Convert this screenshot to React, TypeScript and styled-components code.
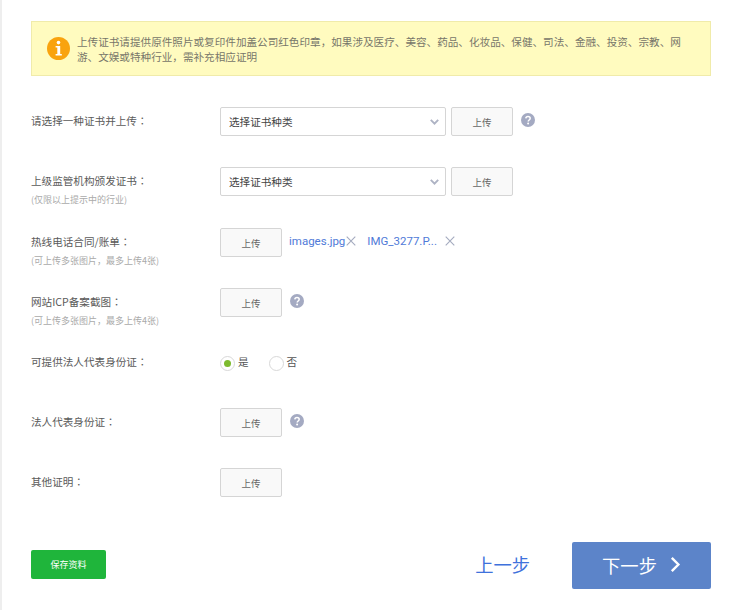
import React from "react";
import styled, { createGlobalStyle } from "styled-components";

const Global = createGlobalStyle`
  html, body { margin: 0; padding: 0; background: #fff; }
  body { font-family: "Noto Sans CJK SC", "Liberation Sans", sans-serif; }
`;

const Page = styled.div`
  box-sizing: border-box;
  width: 740px;
  height: 610px;
  border-left: 2px solid #eeeeee;
  padding: 21px 29px 0 29px;
  overflow: hidden;
  color: #555;
`;

const Notice = styled.div`
  box-sizing: border-box;
  height: 55px;
  background: #fffbbf;
  border: 1px solid #f0ebaa;
  display: flex;
  align-items: center;
  padding: 0 14px 0 15px;
  gap: 7px;
  margin-bottom: 31px;
`;

const NoticeText = styled.p`
  margin: 0;
  padding-top: 1px;
  font-size: 10.6px;
  line-height: 15px;
  color: #77766a;
  width: 612px;
`;

const Form = styled.div`
  display: flex;
  flex-direction: column;
`;

const Row = styled.div<{ $height?: number }>`
  display: flex;
  height: ${(p) => p.$height ?? 60}px;
  align-items: flex-start;
`;

const LabelCol = styled.div`
  width: 189px;
  flex: none;
`;

const Label = styled.div`
  font-size: 10.6px;
  line-height: 16px;
  padding-top: 6px;
  color: #5a5a5a;
`;

const Colon = styled.span`
  font-family: "Noto Sans CJK TC", sans-serif;
`;

const Hint = styled.div`
  font-size: 9px;
  line-height: 12px;
  margin-top: 5px;
  color: #aaa;
`;

const Controls = styled.div`
  display: flex;
  align-items: flex-start;
`;

const SelectBox = styled.div`
  box-sizing: border-box;
  width: 226px;
  height: 29px;
  border: 1px solid #d5d5d5;
  border-radius: 2px;
  background: #fff;
  display: flex;
  align-items: center;
  justify-content: space-between;
  padding: 0 6px 0 8px;
  font-size: 10.6px;
  color: #444;
  margin-right: 5px;
`;

const UploadButton = styled.button`
  box-sizing: border-box;
  width: 62px;
  height: 29px;
  border: 1px solid #d5d5d5;
  border-radius: 2px;
  background: #f9f9f9;
  color: #666;
  font-family: inherit;
  font-size: 9.5px;
  padding: 0;
`;

const HelpWrap = styled.span`
  display: block;
  width: 14px;
  height: 14px;
  margin: 6px 0 0 8px;
`;

const FileName = styled.span`
  font-size: 11.5px;
  line-height: 16px;
  color: #4f7ad8;
  font-family: Roboto, "Liberation Sans", sans-serif;
  padding-top: 5px;
`;

const FileRemove = styled.span<{ $left: number; $after: number }>`
  display: block;
  width: 10px;
  height: 10px;
  margin: 8px ${(p) => p.$after}px 0 ${(p) => p.$left}px;
`;

const FirstFile = styled(FileName)`
  margin-left: 7px;
`;

const RadioGroup = styled.div`
  display: flex;
  align-items: center;
  height: 30px;
`;

const Radio = styled.span<{ $on?: boolean }>`
  box-sizing: border-box;
  width: 15px;
  height: 15px;
  border: 1px solid #d8d8d8;
  border-radius: 50%;
  background: #fff;
  display: flex;
  align-items: center;
  justify-content: center;
  &::after {
    content: "";
    display: ${(p) => (p.$on ? "block" : "none")};
    width: 7px;
    height: 7px;
    border-radius: 50%;
    background: #7dbb2e;
  }
`;

const RadioText = styled.span<{ $gap: number }>`
  font-size: 10.6px;
  line-height: 16px;
  color: #555;
  padding-bottom: 3px;
  margin: 0 ${(p) => p.$gap}px 0 3px;
`;

const Footer = styled.div`
  display: flex;
  align-items: flex-start;
  margin-top: 14px;
  height: 47px;
`;

const SaveButton = styled.button`
  width: 75px;
  height: 29px;
  margin-top: 8px;
  background: #1fb53b;
  border: none;
  border-radius: 2px;
  color: #fff;
  font-family: inherit;
  font-size: 9px;
  padding: 0;
`;

const PrevLink = styled.a`
  margin-left: auto;
  margin-right: 42px;
  color: #3f72dc;
  font-size: 18.3px;
  line-height: 45px;
`;

const NextButton = styled.button`
  width: 139px;
  height: 47px;
  background: #5c84c9;
  border: none;
  border-radius: 2px;
  color: #fff;
  font-family: inherit;
  font-size: 18.3px;
  display: flex;
  align-items: center;
  justify-content: center;
  gap: 13px;
  padding: 0 0 2px 0;
`;

const InfoIcon = () => (
  <svg width="23" height="23" viewBox="0 0 23 23" style={{ flex: "none" }}>
    <circle cx="11.5" cy="11.5" r="11.5" fill="#f9a30e" />
    <circle cx="11.5" cy="5.6" r="1.8" fill="#fff" />
    <path d="M8.6 9h4.6v8h1.6v1.6H8.6V17h1.7v-6.4H8.6z" fill="#fff" />
  </svg>
);

const HelpIcon = () => (
  <HelpWrap>
    <svg width="14" height="14" viewBox="0 0 14 14" style={{ display: "block" }}>
      <circle cx="7" cy="7" r="7" fill="#a4aac2" />
      <path d="M4.8 5.4C4.9 4.1 5.8 3.4 7 3.4c1.3 0 2.2.8 2.2 1.9 0 1.7-2 1.7-2 3.3" fill="none" stroke="#fff" strokeWidth="1.5" />
      <circle cx="7.1" cy="10.6" r="1" fill="#fff" />
    </svg>
  </HelpWrap>
);

const Chevron = () => (
  <svg width="9" height="6" viewBox="0 0 9 6">
    <path d="M.8.8 4.5 4.6 8.2.8" fill="none" stroke="#aeb3c4" strokeWidth="1.9" />
  </svg>
);

const Cross = () => (
  <svg width="10" height="10" viewBox="0 0 10 10" style={{ display: "block" }}>
    <path d="M.7.7 9.3 9.3M9.3.7.7 9.3" stroke="#a4abbf" strokeWidth="1.1" />
  </svg>
);

const NextArrow = () => (
  <svg width="11" height="17" viewBox="0 0 11 17">
    <path d="M1.8 1.8 8.4 8.5 1.8 15.2" fill="none" stroke="#fff" strokeWidth="2.4" />
  </svg>
);

const Select = () => (
  <SelectBox>
    选择证书种类
    <Chevron />
  </SelectBox>
);

export default function App() {
  return (
    <Page>
      <Global />
      <Notice>
        <InfoIcon />
        <NoticeText>
          上传证书请提供原件照片或复印件加盖公司红色印章，如果涉及医疗、美容、药品、化妆品、保健、司法、金融、投资、宗教、网游、文娱或特种行业，需补充相应证明
        </NoticeText>
      </Notice>
      <Form>
        <Row>
          <LabelCol>
            <Label>请选择一种证书并上传<Colon>：</Colon></Label>
          </LabelCol>
          <Controls>
            <Select />
            <UploadButton>上传</UploadButton>
            <HelpIcon />
          </Controls>
        </Row>
        <Row $height={61}>
          <LabelCol>
            <Label>上级监管机构颁发证书<Colon>：</Colon></Label>
            <Hint>(仅限以上提示中的行业)</Hint>
          </LabelCol>
          <Controls>
            <Select />
            <UploadButton>上传</UploadButton>
          </Controls>
        </Row>
        <Row>
          <LabelCol>
            <Label>热线电话合同/账单<Colon>：</Colon></Label>
            <Hint>(可上传多张图片，最多上传4张)</Hint>
          </LabelCol>
          <Controls>
            <UploadButton>上传</UploadButton>
            <FirstFile>images.jpg</FirstFile>
            <FileRemove $left={1} $after={11}>
              <Cross />
            </FileRemove>
            <FileName>IMG_3277.P...</FileName>
            <FileRemove $left={8} $after={0}>
              <Cross />
            </FileRemove>
          </Controls>
        </Row>
        <Row>
          <LabelCol>
            <Label>网站ICP备案截图<Colon>：</Colon></Label>
            <Hint>(可上传多张图片，最多上传4张)</Hint>
          </LabelCol>
          <Controls>
            <UploadButton>上传</UploadButton>
            <HelpIcon />
          </Controls>
        </Row>
        <Row>
          <LabelCol>
            <Label>可提供法人代表身份证<Colon>：</Colon></Label>
          </LabelCol>
          <RadioGroup>
            <Radio $on />
            <RadioText $gap={20}>是</RadioText>
            <Radio />
            <RadioText $gap={0}>否</RadioText>
          </RadioGroup>
        </Row>
        <Row>
          <LabelCol>
            <Label>法人代表身份证<Colon>：</Colon></Label>
          </LabelCol>
          <Controls>
            <UploadButton>上传</UploadButton>
            <HelpIcon />
          </Controls>
        </Row>
        <Row>
          <LabelCol>
            <Label>其他证明<Colon>：</Colon></Label>
          </LabelCol>
          <Controls>
            <UploadButton>上传</UploadButton>
          </Controls>
        </Row>
      </Form>
      <Footer>
        <SaveButton>保存资料</SaveButton>
        <PrevLink>上一步</PrevLink>
        <NextButton>
          下一步
          <NextArrow />
        </NextButton>
      </Footer>
    </Page>
  );
}
